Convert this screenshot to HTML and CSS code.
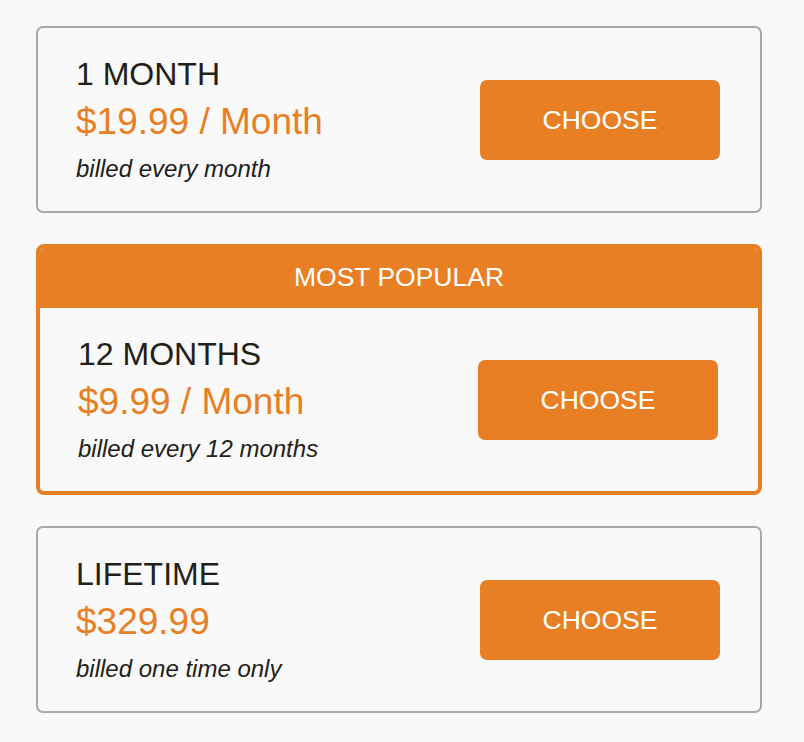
FILE: index.html
```html
<!DOCTYPE html>
<html lang="en">
<head>
<meta charset="utf-8">
<title>Plans</title>
<link rel="stylesheet" href="styles.css">
</head>
<body>
<main class="plans">
  <section class="plan">
    <div class="plan-body">
      <div class="plan-info">
        <div class="plan-name">1 MONTH</div>
        <div class="plan-price">$19.99 / Month</div>
        <div class="plan-note">billed every month</div>
      </div>
      <button class="choose">CHOOSE</button>
    </div>
  </section>
  <section class="plan plan-popular">
    <div class="plan-badge">MOST POPULAR</div>
    <div class="plan-body">
      <div class="plan-info">
        <div class="plan-name">12 MONTHS</div>
        <div class="plan-price">$9.99 / Month</div>
        <div class="plan-note">billed every 12 months</div>
      </div>
      <button class="choose">CHOOSE</button>
    </div>
  </section>
  <section class="plan">
    <div class="plan-body">
      <div class="plan-info">
        <div class="plan-name">LIFETIME</div>
        <div class="plan-price">$329.99</div>
        <div class="plan-note">billed one time only</div>
      </div>
      <button class="choose">CHOOSE</button>
    </div>
  </section>
</main>
</body>
</html>
```

FILE: styles.css
```css
html, body {
  margin: 0;
  padding: 0;
  background: #f9f9f9;
}

body {
  font-family: "Liberation Sans", Arial, Helvetica, sans-serif;
  color: #1f2118;
}

.plans {
  padding: 26px 42px 29px 36px;
  display: flex;
  flex-direction: column;
  gap: 31px;
}

.plan {
  border: 2px solid #a8aaaa;
  border-radius: 7px;
  background: #f9f9f9;
  overflow: hidden;
}

.plan-popular {
  border: 4px solid #e97f24;
  border-radius: 8px;
}

.plan-badge {
  background: #e97f24;
  color: #ffffff;
  height: 60px;
  line-height: 58px;
  text-align: center;
  font-size: 26.5px;
  margin-top: -4px;
  padding-top: 4px;
}

.plan-body {
  display: flex;
  align-items: center;
  justify-content: space-between;
  padding: 28px 40px 27px 38px;
}

.plan-info {
  display: flex;
  flex-direction: column;
}

.plan-name {
  font-size: 32px;
  line-height: 36px;
}

.plan-price {
  font-size: 37px;
  line-height: 42px;
  margin-top: 9px;
  color: #e97f24;
}

.plan-note {
  font-size: 24px;
  line-height: 30px;
  margin-top: 11px;
  font-style: italic;
}

.choose {
  width: 240px;
  height: 80px;
  border: none;
  border-radius: 7px;
  background: #e97f24;
  color: #ffffff;
  font-family: "Liberation Sans", Arial, Helvetica, sans-serif;
  font-size: 26.5px;
  padding: 0;
  cursor: pointer;
}
```
